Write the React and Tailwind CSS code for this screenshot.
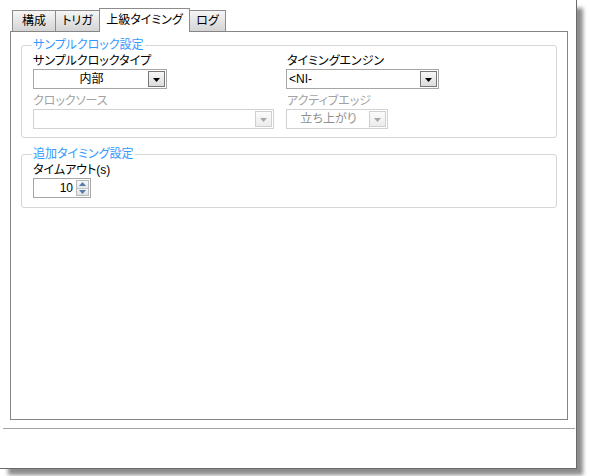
import React from "react";

const font = "font-['Liberation_Sans','Noto_Sans_CJK_JP',sans-serif] [font-feature-settings:'palt']";

function Arrow({ color = "#000" }) {
  return (
    <svg width="7" height="4" viewBox="0 0 7 4" className="block">
      <path d="M0 0 H7 L3.5 4 Z" fill={color} />
    </svg>
  );
}

function DropButton({ disabled }) {
  return (
    <div
      className={
        "w-[17px] h-full flex items-end justify-center pb-[4px] border bg-gradient-to-b " +
        (disabled
          ? "border-[#cfcfcf] from-[#fbfbfb] to-[#ececec]"
          : "border-[#777777] from-[#f7f7f7] to-[#dcdcdc]")
      }
    >
      <Arrow color={disabled ? "#a8a8a8" : "#000"} />
    </div>
  );
}

function Select({ width, text, align = "center", disabled }) {
  return (
    <div
      className={
        "h-[20px] flex p-[1px] border bg-white " +
        (disabled ? "border-[#d2d2d2]" : "border-[#a6a6a6]")
      }
      style={{ width }}
    >
      <div
        className={
          "flex-1 flex items-center text-[12px] leading-[12px] " +
          (align === "center" ? "justify-center " : "justify-start pl-[1px] ") +
          (disabled ? "text-[#8f8f8f]" : "text-black")
        }
      >
        {text}
      </div>
      <DropButton disabled={disabled} />
    </div>
  );
}

function Tab({ label, active, w, first }) {
  if (active) {
    return (
      <div
        className={
          "relative z-10 h-[24px] -ml-px bg-white border border-b-0 border-[#8c8c8c] flex items-center justify-center text-[12px] leading-[12px] text-black pb-[1px]"
        }
        style={{ width: w }}
      >
        {label}
      </div>
    );
  }
  return (
    <div
      className={
        "mt-[2px] h-[21px] border border-b-0 border-[#8c8c8c] bg-gradient-to-b from-[#f6f6f6] to-[#d4d4d4] flex items-center justify-center text-[12px] leading-[12px] text-black " +
        (first ? "" : "-ml-px")
      }
      style={{ width: w }}
    >
      {label}
    </div>
  );
}

function Label({ children, disabled }) {
  return (
    <div
      className={
        "h-[12px] text-[12px] leading-[12px] whitespace-nowrap " +
        (disabled ? "text-[#a2a2a2]" : "text-black")
      }
    >
      {children}
    </div>
  );
}

function Spinner() {
  return (
    <div className="w-[13px] h-full flex flex-col border border-[#b9b9b9]">
      <div className="flex-1 flex items-center justify-center bg-gradient-to-b from-[#f8f8f8] to-[#e2e6ec]">
        <svg width="7" height="4" viewBox="0 0 7 4" className="block">
          <path d="M0 4 H7 L3.5 0 Z" fill="#5a7aa8" />
        </svg>
      </div>
      <div className="h-px bg-[#c6c6c6]" />
      <div className="flex-1 flex items-center justify-center bg-gradient-to-b from-[#f4f4f4] to-[#dde2ea]">
        <svg width="7" height="4" viewBox="0 0 7 4" className="block">
          <path d="M0 0 H7 L3.5 4 Z" fill="#5a7aa8" />
        </svg>
      </div>
    </div>
  );
}

export default function App() {
  return (
    <div className={"w-[590px] h-[476px] bg-white overflow-hidden " + font}>
      <div className="w-[577px] h-[469px] bg-white border-r border-b border-[#6a6a6a] shadow-[7px_7px_4px_-1px_rgba(0,0,0,0.45)] pt-[8px]">
        {/* tabs */}
        <div className="h-[23px] flex items-start pl-[12px]">
          <Tab label="構成" w={44} first />
          <Tab label="トリガ" w={45} />
          <Tab label="上級タイミング" w={91} active />
          <Tab label="ログ" w={37} />
        </div>

        {/* panel */}
        <div className="ml-[10px] w-[558px] h-[389px] border border-[#858585] bg-white pl-[10px] pt-[7px]">
          <fieldset className="w-[536px] border border-[#d6d6d6] rounded-[3px] pl-[11px] pt-[4px] pb-[8px]">
            <legend className="-ml-px px-[1px] text-[12px] leading-[12px] text-[#3399ff]">
              サンプルクロック設定
            </legend>
            <div className="grid grid-cols-[253px_1fr]">
              <div className="flex flex-col">
                <Label>サンプルクロックタイプ</Label>
                <div className="mt-[2px]">
                  <Select width={134} text="内部" />
                </div>
                <div className="mt-[6px]">
                  <Label disabled>クロックソース</Label>
                </div>
                <div className="mt-[2px]">
                  <Select width={241} text="" disabled />
                </div>
              </div>
              <div className="flex flex-col">
                <div className="pl-[1px]">
                  <Label>タイミングエンジン</Label>
                </div>
                <div className="mt-[2px]">
                  <Select width={153} text="<NI-" align="left" />
                </div>
                <div className="mt-[6px] pl-[1px]">
                  <Label disabled>アクティブエッジ</Label>
                </div>
                <div className="mt-[2px]">
                  <Select width={102} text="立ち上がり" disabled />
                </div>
              </div>
            </div>
          </fieldset>

          <fieldset className="mt-[10px] w-[536px] border border-[#d6d6d6] rounded-[3px] pl-[11px] pt-[4px] pb-[9px]">
            <legend className="-ml-px px-[1px] text-[12px] leading-[12px] text-[#3399ff]">
              追加タイミング設定
            </legend>
            <Label>タイムアウト(s)</Label>
            <div className="mt-[2px] w-[58px] h-[20px] border border-[#a6a6a6] bg-white flex p-[1px]">
              <div className="flex-1 flex items-center justify-end pr-[3px] text-[12px] leading-[12px] text-black">
                10
              </div>
              <Spinner />
            </div>
          </fieldset>
        </div>

        {/* separator */}
        <div className="mt-[8px] ml-[3px] w-[572px] h-px bg-[#a3a3a3]" />
      </div>
    </div>
  );
}
